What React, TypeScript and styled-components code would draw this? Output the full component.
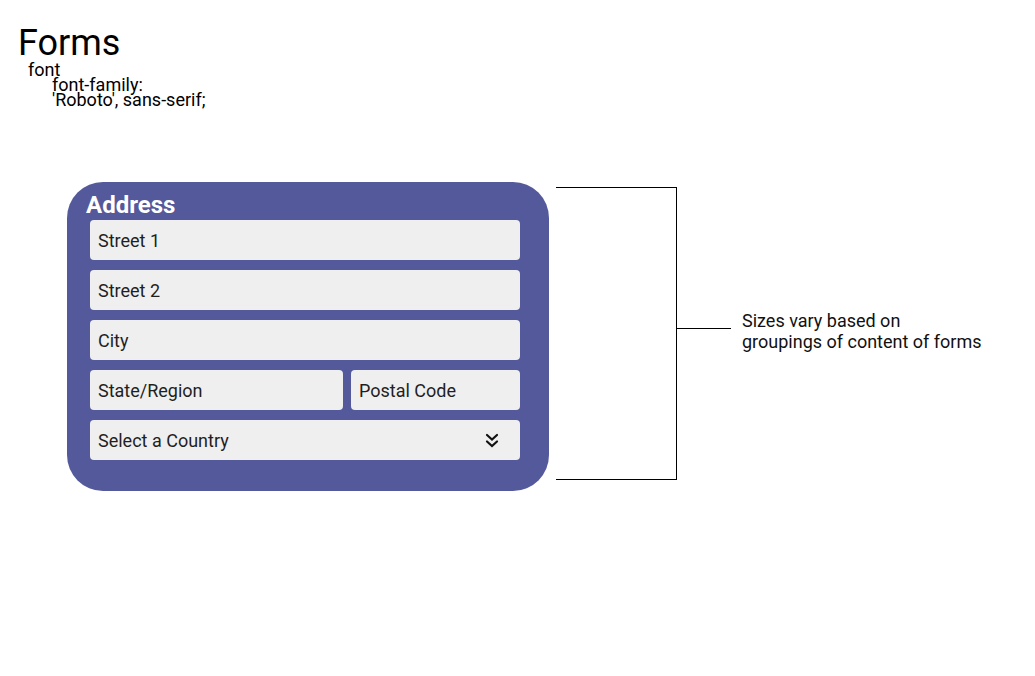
import React from "react";
import styled, { createGlobalStyle } from "styled-components";

const GlobalStyle = createGlobalStyle`
  html, body {
    margin: 0;
    padding: 0;
    background: #ffffff;
    font-family: Roboto, "Liberation Sans", sans-serif;
    color: #000;
  }
`;

const Page = styled.div`
  width: 1035px;
  min-height: 676px;
  padding-top: 24px;
  box-sizing: border-box;
`;

const Title = styled.h1`
  margin: 0 0 0 18px;
  font-size: 36px;
  line-height: 38px;
  font-weight: 400;
`;

const Note = styled.div<{ $indent: number }>`
  margin-left: ${(p) => p.$indent}px;
  font-size: 18px;
  line-height: 15px;
  white-space: nowrap;
`;

const Row = styled.div`
  display: flex;
  align-items: flex-start;
  margin: 75px 0 0 67px;
`;

const Card = styled.section`
  width: 482px;
  box-sizing: border-box;
  padding: 9px 29px 31px 23px;
  background: #53599b;
  border-radius: 36px;
  display: flex;
  flex-direction: column;
`;

const CardTitle = styled.h2`
  margin: 0 0 1px -4px;
  font-size: 24px;
  line-height: 28px;
  font-weight: 700;
  color: #ffffff;
`;

const Fields = styled.div`
  display: flex;
  flex-direction: column;
  gap: 10px;
`;

const FieldRow = styled.div`
  display: flex;
  gap: 8px;
`;

const Field = styled.div<{ $width?: number }>`
  flex: ${(p) => (p.$width ? `0 0 ${p.$width}px` : "1 1 auto")};
  height: 40px;
  min-height: 40px;
  box-sizing: border-box;
  padding: 0 21px 0 8px;
  background: #efefef;
  border-radius: 4px;
  display: flex;
  align-items: center;
  justify-content: space-between;
  font-size: 18px;
  color: #1f1f1f;
`;

const Bracket = styled.div`
  margin: 5px 0 0 7px;
  width: 120px;
  height: 291px;
  border-top: 1px solid #000;
  border-bottom: 1px solid #000;
  border-right: 1px solid #000;
`;

const Annotation = styled.div`
  display: flex;
  align-items: flex-start;
  margin-top: 128px;
`;

const Connector = styled.div`
  width: 54px;
  height: 1px;
  margin-top: 18px;
  background: #000;
`;

const Label = styled.p`
  margin: 0 0 0 11px;
  font-size: 18px;
  line-height: 21px;
  color: #111;
`;

const ChevronsDown = () => (
  <svg width="14" height="15" viewBox="0 0 14 15" fill="none">
    <path d="M2 2 L7 6.5 L12 2" stroke="#111" strokeWidth="2.2" strokeLinecap="round" strokeLinejoin="miter" />
    <path d="M2 8.5 L7 13 L12 8.5" stroke="#111" strokeWidth="2.2" strokeLinecap="round" strokeLinejoin="miter" />
  </svg>
);

export default function App() {
  return (
    <>
      <GlobalStyle />
      <Page>
        <Title>Forms</Title>
        <Note $indent={28}>font</Note>
        <Note $indent={52}>font-family:</Note>
        <Note $indent={52}>'Roboto', sans-serif;</Note>
        <Row>
          <Card>
            <CardTitle>Address</CardTitle>
            <Fields>
              <Field>Street 1</Field>
              <Field>Street 2</Field>
              <Field>City</Field>
              <FieldRow>
                <Field $width={253}>State/Region</Field>
                <Field>Postal Code</Field>
              </FieldRow>
              <Field>
                <span>Select a Country</span>
                <ChevronsDown />
              </Field>
            </Fields>
          </Card>
          <Bracket />
          <Annotation>
            <Connector />
            <Label>
              Sizes vary based on
              <br />
              groupings of content of forms
            </Label>
          </Annotation>
        </Row>
      </Page>
    </>
  );
}
